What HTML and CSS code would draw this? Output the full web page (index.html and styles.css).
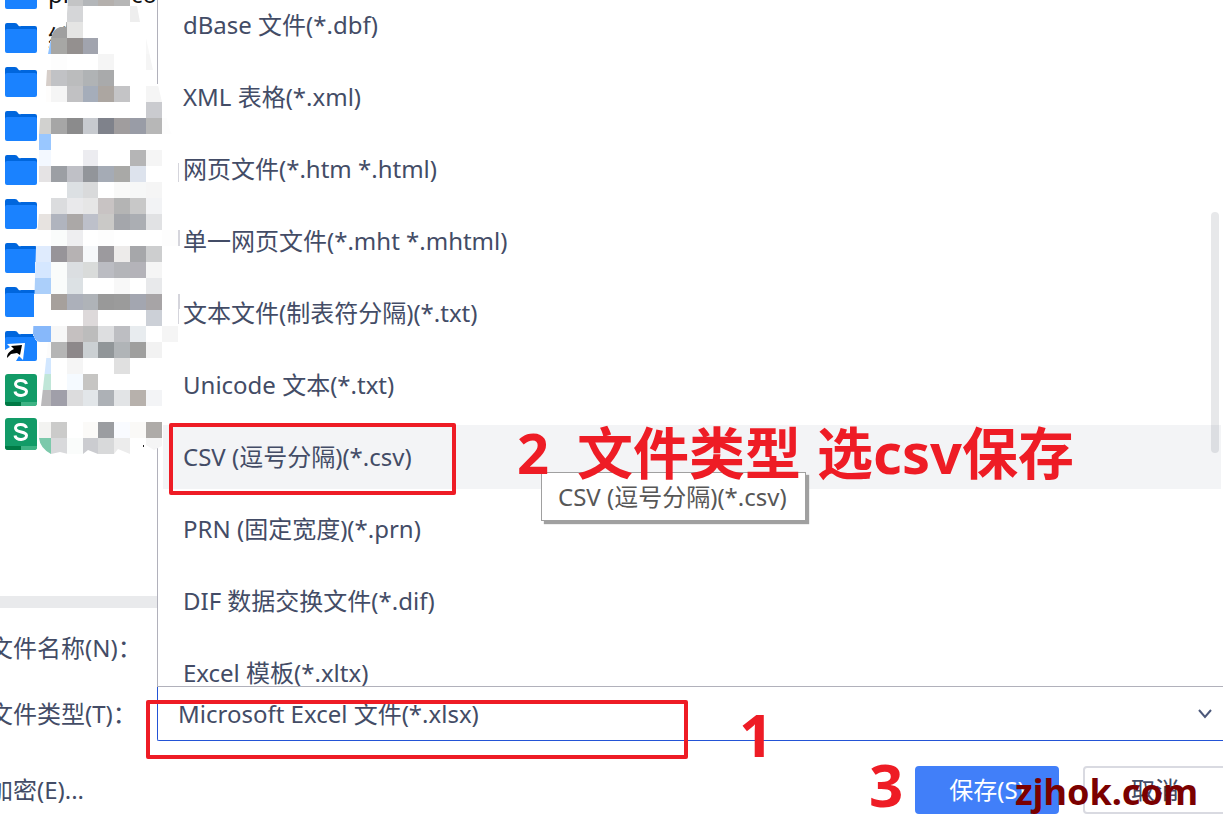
FILE: index.html
```html
<!DOCTYPE html>
<html lang="zh-CN">
  <head>
    <meta charset="UTF-8" />
    <title>另存为</title>
    <link rel="stylesheet" href="styles.css">
  </head>
  <body>
    <svg class="symbols" aria-hidden="true">
      <symbol id="folder" viewBox="0 0 32 30">
        <path fill="#0066dd" d="M0 2a2 2 0 0 1 2-2h8q2 0 3 2t3 1h14a2 2 0 0 1 2 2v12H0z" />
        <path fill="#1a82ff" d="M0 8a2 2 0 0 1 2-2h28a2 2 0 0 1 2 2v20a2 2 0 0 1-2 2H2a2 2 0 0 1-2-2z" />
      </symbol>
      <symbol id="shortcut" viewBox="0 0 32 30">
        <use href="#folder" />
        <path fill="#fff" d="M2 13l18-1-2 17-4-4-3 5H0V19l5-3z" />
        <path fill="#000" d="M6 15l11-1-2 10-3-2-6 1-4 4c0-5 3-7 7-9z" />
      </symbol>
      <symbol id="sheet" viewBox="0 0 32 32">
        <rect width="32" height="32" rx="3" fill="#129b67" />
        <path fill="#007a45" d="M0 28h16v4H3a3 3 0 0 1-3-3z" />
        <path fill="#3eb384" d="M16 28h16v1a3 3 0 0 1-3 3H16z" />
        <path fill="none" stroke="#fff" stroke-width="3" d="M21.500 10C20.500 5.500 10.500 5 10.500 10C10.500 15.500 21.500 12.500 21.500 17.500C21.500 23 10.500 22.500 10 17.500" />
      </symbol>
    </svg>

    <div class="dialog">
      <div class="sidebar">
        <ul class="file-list">
          <li><svg class="icon"><use href="#folder" /></svg><span>pr</span><span class="name-end">co</span></li>
          <li><svg class="icon"><use href="#folder" /></svg><span>结</span></li>
          <li><svg class="icon"><use href="#folder" /></svg></li>
          <li><svg class="icon"><use href="#folder" /></svg></li>
          <li><svg class="icon"><use href="#folder" /></svg></li>
          <li><svg class="icon"><use href="#folder" /></svg></li>
          <li><svg class="icon"><use href="#folder" /></svg></li>
          <li><svg class="icon"><use href="#folder" /></svg></li>
          <li><svg class="icon"><use href="#shortcut" /></svg></li>
          <li><svg class="icon sheet"><use href="#sheet" /></svg></li>
          <li><svg class="icon sheet"><use href="#sheet" /></svg></li>
        </ul>
        <div class="separator"></div>
        <div class="label name-label">文件名称(N)：</div>
      </div>

      <div class="dropdown">
        <button class="option" type="button">dBase 文件(*.dbf)</button>
        <button class="option" type="button">XML 表格(*.xml)</button>
        <button class="option" type="button">网页文件(*.htm *.html)</button>
        <button class="option" type="button">单一网页文件(*.mht *.mhtml)</button>
        <button class="option" type="button">文本文件(制表符分隔)(*.txt)</button>
        <button class="option" type="button">Unicode 文本(*.txt)</button>
        <button class="option active" type="button">CSV (逗号分隔)(*.csv)</button>
        <button class="option" type="button">PRN (固定宽度)(*.prn)</button>
        <button class="option" type="button">DIF 数据交换文件(*.dif)</button>
        <button class="option" type="button">Excel 模板(*.xltx)</button>
        <div class="scroll-thumb"></div>
      </div>

      <label class="label type-label" for="file_type">文件类型(T)：</label>
      <div class="type-field">
        <select id="file_type" name="file_type">
          <option>Microsoft Excel 文件(*.xlsx)</option>
        </select>
        <svg class="chevron" viewBox="0 0 14 10"><path d="M1 1l6 7 6-7" /></svg>
      </div>

      <div class="footer">
        <a class="label" href="#">加密(E)...</a>
        <div class="actions">
          <button class="btn save" type="button">保存(S)</button>
          <button class="btn cancel" type="button">取消</button>
        </div>
      </div>
    </div>

    <!-- blurred file names -->
    <svg class="mosaic" id="mosaic" viewBox="0 0 190 470" aria-hidden="true">
      <defs>
        <clipPath id="mask">
          <path id="mask-shape" d="M68 0L66 27H60Q53 29 51 38L48 54L46 86V102H44L40 120L39 134V214L36 246L34 310L33 334Q35 342 40 342H48L45 370L41 406L39 422V438Q40 448 51 454L60 452L68 454H83L88 450L98 454L114 454L118 449L130 454L146 445L154 450L162 446V342H178V150L170 130L162 102L158 85L153 70L146 38L143 22H140L137 6H130V0Z" />
        </clipPath>
      </defs>
      <use href="#mask-shape" fill="#fff" />
      <g id="cells" clip-path="url(#mask)"></g>
      <path fill="#d5d5dc" d="M178 163h1v19h-1zM178 230h2v16h-2zM178 294h2l-1 30h-1z" />
      <circle cx="143.500" cy="446" r="1" fill="#222" />
    </svg>

    <div class="tooltip">CSV (逗号分隔)(*.csv)</div>

    <div class="mark-box mark-csv"></div>
    <div class="mark-box mark-type"></div>
    <div class="mark mark-one">1</div>
    <div class="mark mark-two"><span>2</span><span>文件类型</span><span>选csv保存</span></div>
    <div class="mark mark-three">3</div>
    <div class="watermark">zjhok.com</div>

    <script>
      // left edge of every column, rows are 16px high
      const columns = [33, 51, 67, 83, 98, 114, 130, 146, 162, 178];
      // "-" leaves the cell white
      const rows = [
        "- - c3c4c5 b3b6b9 b4b0ad b6b6b6 cbccce - -",
        "- - d5d6d8 - - - eeeeee - -",
        "- 9f9f9f e5e5e4 - - - - - -",
        "8fc2ff a7a7a5 94908f a1a4ae - - - f7f7f7 -",
        "- fdfdfd - - f5f5f5 - - f5f5f5 -",
        "d6cec9 c1c2c5 bbbcbd b0b3b5 a9aaab - - - -",
        "fefdfc f5f5f5 c1c1c3 a5adba aca6a1 c4c4c6 - f5f5f5 -",
        "- - - - - - - cacbcf -",
        "d1d1cf a6a6a6 8b8b8c c7cacf 7f828b a09d9e 999ca6 b7b7b7 fdfdfd",
        "99c7ff - - - - - - - -",
        "f3f8ff - - ececf0 - - b5b5b6 f5f5f5 -",
        "e5e3e4 9c9fa4 bfc0c6 92959a a5abb5 a9a9a7 dde3ed - -",
        "- - dce0e3 d9dadb - f9f9f8 f6f7f7 f5f5f5 -",
        "- dbdcde e9e9eb e6e6e6 c8c3c3 b4b4b4 c8c8c8 f2f3f5 -",
        "e7e3e0 b0b4be aba8a7 bdc0ca cac9c7 a4a6ab abaeb3 e1e2e4 -",
        "- fafcfb eeeef0 - fdfdfd - - - fdfdfd",
        "dfebfd 979499 b6b2b3 f6f8fa 9c9a9e edebea a6a7aa cdcecf -",
        "d5e7ff fafcfb dbdee1 d9dbda bbbcc2 b4b5b9 b4b3b9 f5f5f5 -",
        "abcffa fafcfb dce1e4 - - f8f8f8 - e8e9eb -",
        "- a6a09c acb0ba afb3b8 999999 9b9b9b a3a6b0 a7a4a6 -",
        "- - - ddd9da - - - ccd0d7 -",
        "87b8fa f7f7f7 c5c0c0 bcbcbc dddee0 bdbec2 e8ecef - f5f5f5",
        "fcfcfc b5b5b5 8d888a cbd0d3 919699 b0b4b7 9f9f9e f2f2f2 -",
        "d2e7ff - f5f5f5 - - e0e0e0 - - -",
        "c0e6d8 - f5faff c6c5c3 - - - - -",
        "bab9bb a09fa9 dcdcdd e2e6e9 adb1b6 e2e4e6 b7b1ac f3f4f6 -",
        "- - - - - - - - -",
        "f3f3f1 cbcbca - fbfaf8 9b9da1 f9fbff faf9f7 aeaba8 -",
        "7cc9ab d8d9db fafcfb cbccd0 d8d9da ececec - f5f5f5 -"
      ];

      const cells = document.getElementById("cells");
      rows.forEach((row, r) => {
        row.split(" ").forEach((color, c) => {
          if (color === "-") return;
          const rect = document.createElementNS("http://www.w3.org/2000/svg", "rect");
          rect.setAttribute("x", columns[c]);
          rect.setAttribute("y", r * 16 - 10);
          rect.setAttribute("width", columns[c + 1] - columns[c]);
          rect.setAttribute("height", 16);
          rect.setAttribute("fill", "#" + color);
          cells.appendChild(rect);
        });
      });
    </script>
  </body>
</html>
```
FILE: styles.css
```css
* {
  box-sizing: border-box;
}
body {
  margin: 0;
  background-color: #fff;
  color: #434c66;
  font-family: "Noto Sans", "Noto Sans CJK SC", sans-serif;
  font-size: 24px;
  line-height: 32px;
  overflow: hidden;
}
button,
select {
  font: inherit;
  color: inherit;
}
.symbols {
  display: none;
}
.dialog {
  display: grid;
  grid-template-columns: 157px 1fr;
  overflow: hidden;
}
.sidebar {
  display: flex;
  flex-direction: column;
  min-width: 0;
}
.file-list {
  list-style: none;
  margin: -28px 0 0;
  padding: 0 0 0 5px;
  color: #111;
}
.file-list li {
  display: flex;
  align-items: center;
  gap: 11px;
  height: 44px;
  overflow: hidden;
}
.icon {
  flex: none;
  width: 32px;
  height: 30px;
}
.icon.sheet {
  height: 32px;
}
.name-end {
  margin-left: auto;
}
.separator {
  height: 12px;
  margin-top: auto;
  background-color: #e9eaec;
}
.label {
  display: flex;
  align-items: center;
  margin-left: -11px;
  color: inherit;
  text-decoration: none;
  white-space: nowrap;
}
.name-label {
  height: 79px;
}

/* open list of file types */
.dropdown {
  position: relative;
  display: flex;
  flex-direction: column;
  gap: 8px;
  height: 687px;
  overflow: hidden;
  border-left: 1px solid #b1b1bb;
  border-bottom: 1px solid #b1b1bb;
}
.option {
  flex: none;
  height: 64px;
  margin: 0 2px 0 5px;
  padding: 0 20px;
  border: none;
  background: none;
  text-align: left;
}
.option:first-child {
  margin-top: -7px;
}
.option.active {
  background-color: #f3f4f6;
}
.scroll-thumb {
  position: absolute;
  top: 212px;
  right: 4px;
  width: 8px;
  height: 241px;
  border-radius: 4px;
  background-color: rgba(60, 65, 80, 0.12);
}

.type-field {
  display: grid;
  align-items: center;
}
.type-field select {
  grid-area: 1 / 1;
  width: 100%;
  height: 54px;
  padding: 0 20px;
  border: 1px solid #2353d6;
  border-width: 0 0 1px 1px;
  border-radius: 0 0 0 2px;
  background: none;
  appearance: none;
}
.chevron {
  grid-area: 1 / 1;
  justify-self: end;
  width: 14px;
  height: 10px;
  margin-right: 11px;
  pointer-events: none;
}
.chevron path {
  fill: none;
  stroke: #4c587a;
  stroke-width: 2;
}

.footer {
  grid-column: 1 / 3;
  display: flex;
  justify-content: space-between;
  padding: 25px 0 21px;
}
.actions {
  display: flex;
  gap: 24px;
  margin-right: -4px;
}
.btn {
  width: 144px;
  height: 48px;
  padding: 0;
  border: 2px solid #d9dae1;
  border-radius: 4px;
  background-color: #fff;
}
.btn.save {
  border-color: #417ff9;
  background-color: #417ff9;
  color: #fff;
}

.mosaic {
  position: absolute;
  top: 0;
  left: 0;
  width: 190px;
  height: 470px;
  shape-rendering: crispEdges;
}
.tooltip {
  position: absolute;
  top: 472px;
  left: 541px;
  padding: 8px 18px 7px 16px;
  border: 1px solid #a0a0a0;
  background-color: #fff;
  box-shadow: 3px 3px 1px #a0a0a0;
  color: #575757;
  white-space: nowrap;
}

/* red notes */
.mark-box {
  position: absolute;
  border: 4px solid #ee1c25;
  border-radius: 2px;
}
.mark-csv {
  top: 423px;
  left: 169px;
  width: 287px;
  height: 72px;
}
.mark-type {
  top: 700px;
  left: 146px;
  width: 542px;
  height: 59px;
}
.mark {
  position: absolute;
  color: #ee1c25;
  font-size: 60px;
  font-weight: bold;
  line-height: 64px;
  white-space: nowrap;
}
.mark-one {
  top: 702px;
  left: 739px;
}
.mark-two {
  top: 420px;
  left: 517px;
  display: flex;
  font-size: 56px;
}
.mark-two span + span {
  margin-left: 16px;
}
.mark-two span:nth-child(2) {
  margin-left: 28px;
}
.mark-three {
  top: 752px;
  left: 869px;
}
.watermark {
  position: absolute;
  top: 772px;
  left: 1015px;
  color: #7b0000;
  font-size: 36px;
  font-weight: bold;
  line-height: 40px;
}
```
